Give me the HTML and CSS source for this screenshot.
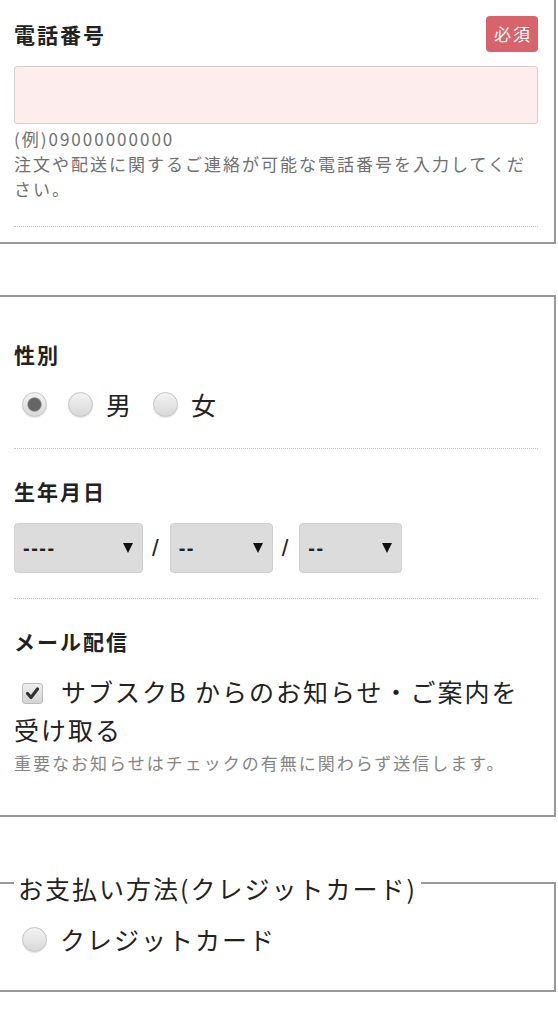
FILE: index.html
```html
<!DOCTYPE html>
<html lang="ja">

<head>
    <meta charset="UTF-8">
    <meta name="viewport" content="width=device-width, initial-scale=1.0">
    <title>会員情報の入力</title>
    <link rel="stylesheet" href="styles.css">
</head>

<body>
    <!-- 電話番号 -->
    <div class="card card-top">
        <div class="field">
            <div class="field-head">
                <h2 class="field-title">電話番号</h2>
                <span class="badge">必須</span>
            </div>
            <input type="tel" class="text-input" name="tel">
            <p class="hint">(例)09000000000<br>注文や配送に関するご連絡が可能な電話番号を入力してください。</p>
        </div>
    </div>

    <!-- 任意項目 -->
    <div class="card">
        <div class="field">
            <h2 class="field-title">性別</h2>
            <div class="radio-row">
                <label class="radio-item"><input type="radio" class="radio" name="sex" checked></label>
                <label class="radio-item"><input type="radio" class="radio" name="sex"><span class="radio-text">男</span></label>
                <label class="radio-item"><input type="radio" class="radio" name="sex"><span class="radio-text">女</span></label>
            </div>
        </div>

        <div class="field">
            <h2 class="field-title">生年月日</h2>
            <div class="date-row">
                <div class="select-wrap">
                    <select class="select select-year" name="birth_y">
                        <option>----</option>
                    </select>
                </div>
                <span class="sep">/</span>
                <div class="select-wrap">
                    <select class="select" name="birth_m">
                        <option>--</option>
                    </select>
                </div>
                <span class="sep">/</span>
                <div class="select-wrap">
                    <select class="select" name="birth_d">
                        <option>--</option>
                    </select>
                </div>
            </div>
        </div>

        <div class="field field-last">
            <h2 class="field-title">メール配信</h2>
            <label class="check-label"><span class="check-box"><svg width="21" height="21" viewBox="0 0 21 21"><path d="M5.5 10.5 L9 14.5 L15.5 6" fill="none" stroke="#333" stroke-width="3.2" stroke-linecap="round" stroke-linejoin="round"/></svg></span>サブスクB からのお知らせ・ご案内を受け取る</label>
            <p class="note">重要なお知らせはチェックの有無に関わらず送信します。</p>
        </div>
    </div>

    <!-- お支払い方法 -->
    <fieldset class="payment">
        <legend>お支払い方法(クレジットカード)</legend>
        <label class="radio-item"><input type="radio" class="radio" name="payment"><span class="radio-text">クレジットカード</span></label>
    </fieldset>
</body>

</html>
```

FILE: styles.css
```css
body {
    margin: 0;
    font-family: "Noto Sans CJK JP", "Noto Sans", sans-serif;
    color: #222;
    background-color: #fff;
}

.card {
    margin: 51px 2px 0 0;
    padding: 15px 16px 15px 14px;
    border: 2px solid #999;
    border-left: none;
}

.card-top {
    margin-top: 0;
    padding-top: 16px;
    border-top: none;
}

.field {
    padding: 27px 0 25px;
    border-bottom: 1px dotted #c4c4c4;
}

.card-top .field {
    padding-top: 0;
}

.field-last {
    border-bottom: none;
}

.field-head {
    display: flex;
    justify-content: space-between;
    align-items: center;
    height: 36px;
}

.field-title {
    margin: 0;
    font-size: 21px;
    line-height: 30px;
    font-weight: bold;
    letter-spacing: 2px;
}

.badge {
    display: block;
    height: 36px;
    padding: 0 6px 0 8px;
    border-radius: 4px;
    background-color: #d9636b;
    color: #fff;
    font-size: 17px;
    line-height: 36px;
    letter-spacing: 2px;
}

.text-input {
    display: block;
    box-sizing: border-box;
    width: 100%;
    height: 58px;
    margin: 14px 0 0;
    border: 1px solid #d5cfcf;
    border-radius: 3px;
    background-color: #fdeded;
}

.hint {
    margin: 2px 0 0;
    font-size: 17px;
    line-height: 25px;
    letter-spacing: 2px;
    color: #707070;
}

/* radio */
.radio-row {
    display: flex;
    align-items: center;
    height: 38px;
    margin-top: 16px;
}

.radio-item {
    display: flex;
    align-items: center;
    font-size: 25px;
    line-height: 38px;
    letter-spacing: 2px;
}

.radio {
    appearance: none;
    -webkit-appearance: none;
    flex: none;
    width: 25px;
    height: 25px;
    margin: 0 13px 0 8px;
    border: 1px solid #c4c4c4;
    border-radius: 50%;
    background: linear-gradient(#f3f3f3, #d8d8d8);
    box-shadow: 0 1px 1px rgba(0, 0, 0, 0.12);
}

.radio:checked {
    background: radial-gradient(circle, #656565 0, #656565 6px, #8a8a8a 6.6px, transparent 7.6px), linear-gradient(#f3f3f3, #d8d8d8);
}

.radio-text {
    margin-right: 12px;
}

/* date */
.date-row {
    display: flex;
    align-items: center;
    margin-top: 17px;
}

.select-wrap {
    position: relative;
}

.select-wrap::after {
    content: "";
    position: absolute;
    top: 20px;
    right: 10px;
    border-left: 5px solid transparent;
    border-right: 5px solid transparent;
    border-top: 10px solid #111;
    pointer-events: none;
}

.select {
    appearance: none;
    -webkit-appearance: none;
    display: block;
    width: 103px;
    height: 50px;
    margin: 0;
    padding: 0 0 0 8px;
    border: 1px solid #cfcfcf;
    border-radius: 4px;
    background-color: #dcdcdc;
    font-family: "Liberation Sans", Arial, sans-serif;
    font-size: 20px;
    font-weight: bold;
    letter-spacing: 1.5px;
    color: #222;
}

.select-year {
    width: 129px;
}

.sep {
    margin: 0 11px 0 9px;
    font-family: "Liberation Sans", Arial, sans-serif;
    font-size: 24px;
    color: #222;
}

/* mail */
.check-label {
    display: block;
    margin-top: 16px;
    font-size: 25px;
    line-height: 38px;
    letter-spacing: 2px;
}

.check-box {
    display: inline-block;
    box-sizing: border-box;
    width: 21px;
    height: 21px;
    margin: 0 18px 0 8px;
    border: 1px solid #bdbdbd;
    border-radius: 3px;
    background: linear-gradient(#eeeeee, #d4d4d4);
    vertical-align: -2px;
}

.check-box svg {
    display: block;
    margin: -1px;
}

.note {
    margin: 2px 0 0;
    font-size: 17px;
    line-height: 25px;
    letter-spacing: 2px;
    color: #858585;
}

/* payment */
.payment {
    min-width: 0;
    margin: 46px 2px 0 0;
    padding: 17px 16px 32px 14px;
    border: 2px solid #999;
    border-left: none;
}

.payment legend {
    padding: 10px 4px 0;
    font-size: 25px;
    line-height: 30px;
    letter-spacing: 2px;
}
```
